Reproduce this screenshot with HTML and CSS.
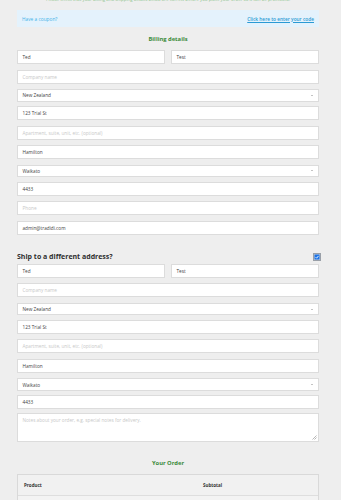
FILE: index.html
```html
<!DOCTYPE html>
<html lang="en">
<head>
<meta charset="utf-8">
<title>Checkout</title>
<link rel="stylesheet" href="styles.css">
</head>
<body>
<div class="page">
  <p class="notice">Please check that your billing and shipping details below are correct before you place your order so it can be processed.</p>

  <div class="coupon">
    <span class="coupon-q">Have a coupon?</span>
    <a class="coupon-link" href="#">Click here to enter your code</a>
  </div>

  <h3 class="section-title">Billing details</h3>

  <div class="row2">
    <div class="field">Ted</div>
    <div class="field">Test</div>
  </div>
  <div class="field ph">Company name</div>
  <div class="field select"><span>New Zealand</span><span class="arrow"></span></div>
  <div class="field">123 Trial St</div>
  <div class="field ph">Apartment, suite, unit, etc. (optional)</div>
  <div class="field">Hamilton</div>
  <div class="field select"><span>Waikato</span><span class="arrow"></span></div>
  <div class="field">4433</div>
  <div class="field ph">Phone</div>
  <div class="field">admin@tradidi.com</div>

  <div class="ship-head">
    <h3 class="ship-title">Ship to a different address?</h3>
    <svg class="check" width="8" height="8" viewBox="0 0 8 8">
      <rect x="0.5" y="0.5" width="7" height="7" fill="#c9ccd3" stroke="#9aa0a8" stroke-width="1"/>
      <rect x="1.5" y="1.5" width="5" height="5" fill="#1a73e8"/>
      <path d="M2.6 4.2 L3.6 5.2 L5.5 2.9" fill="none" stroke="#fff" stroke-width="0.9"/>
    </svg>
  </div>

  <div class="row2">
    <div class="field">Ted</div>
    <div class="field">Test</div>
  </div>
  <div class="field ph">Company name</div>
  <div class="field select"><span>New Zealand</span><span class="arrow"></span></div>
  <div class="field">123 Trial St</div>
  <div class="field ph">Apartment, suite, unit, etc. (optional)</div>
  <div class="field">Hamilton</div>
  <div class="field select"><span>Waikato</span><span class="arrow"></span></div>
  <div class="field">4433</div>
  <div class="field notes ph">
    <span>Notes about your order, e.g. special notes for delivery.</span>
    <svg class="grip" width="5" height="5" viewBox="0 0 5 5">
      <path d="M0.5 4.5 L4.5 0.5 M2.5 4.5 L4.5 2.5" stroke="#888" stroke-width="0.6"/>
    </svg>
  </div>

  <h3 class="section-title order-title">Your Order</h3>

  <div class="order">
    <div class="order-row order-head">
      <span>Product</span>
      <span>Subtotal</span>
    </div>
    <div class="order-row order-body"></div>
  </div>
</div>
</body>
</html>
```
FILE: styles.css
```css
html, body {
  margin: 0;
  padding: 0;
}
body {
  background: #eeeeee;
  font-family: "Open Sans", "DejaVu Sans", sans-serif;
  color: #444;
  overflow: hidden;
}
.page {
  width: 302px;
  margin-left: 17px;
}
.notice {
  margin: -4px 0 0 0;
  height: 6px;
  line-height: 6px;
  font-size: 4.4px;
  color: #8fc58f;
  text-align: center;
  white-space: nowrap;
}
.coupon {
  margin-top: 8px;
  height: 17px;
  padding: 0 5px;
  background: #e4f2fc;
  display: flex;
  justify-content: space-between;
  align-items: center;
  font-size: 4.8px;
}
.coupon-q {
  color: #45b3e9;
}
.coupon-link {
  color: #2a9ad4;
  font-weight: 600;
  text-decoration: underline;
}
.section-title {
  margin: 6.5px 0;
  height: 10px;
  line-height: 10px;
  font-size: 5.8px;
  font-weight: 700;
  color: #3a8a3a;
  text-align: center;
}
.row2 {
  display: grid;
  grid-template-columns: 1fr 1fr;
  gap: 6px;
}
.field {
  box-sizing: border-box;
  height: 14px;
  margin-bottom: 5.5px;
  padding: 0 4.5px;
  background: #fff;
  border: 1px solid #dcdcdc;
  font-size: 4.7px;
  color: #3f3f3f;
  display: flex;
  align-items: center;
}
.field.ph {
  color: #c8c8c8;
}
.field.select {
  height: 12.5px;
  margin-bottom: 4.5px;
  justify-content: space-between;
}
.arrow {
  width: 2px;
  height: 1.2px;
  background: #c4c4c4;
  margin-right: 0.5px;
}
.ship-head {
  margin-top: 17.8px;
  margin-bottom: 1.7px;
  display: flex;
  justify-content: space-between;
  align-items: center;
}
.ship-title {
  margin: 0;
  height: 10px;
  line-height: 10px;
  font-size: 7px;
  font-weight: 700;
  color: #2f2f2f;
}
.check {
  display: block;
  margin-right: -1.5px;
}
.notes {
  height: 28.4px;
  margin-top: -1.5px;
  flex-direction: column;
  align-items: stretch;
  justify-content: space-between;
  padding-top: 3px;
  padding-right: 1px;
  padding-bottom: 1px;
}
.grip {
  display: block;
  align-self: flex-end;
}
.order-title {
  margin-top: 16px;
  margin-bottom: 6.3px;
}
.order {
  border: 1px solid #d9d9d9;
}
.order-row {
  display: grid;
  grid-template-columns: 179px 1fr;
  height: 20px;
  align-items: center;
  font-size: 4.5px;
  border-bottom: 1px solid #dedede;
}
.order-row span {
  padding-left: 6px;
}
.order-head {
  background: #f1f1f1;
  font-weight: 700;
  color: #333;
}
.order-body {
  background: #f3f3f3;
}
```
